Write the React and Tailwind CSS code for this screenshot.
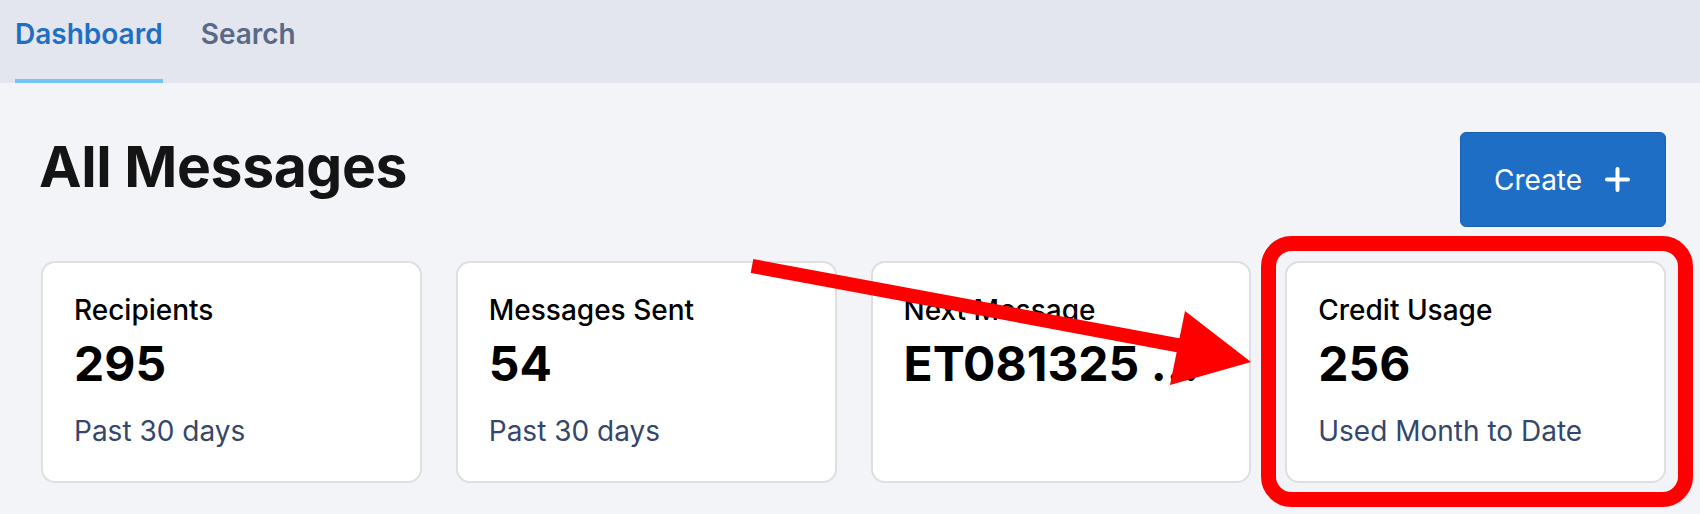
import { Fragment } from 'react';

const stats = [
  { label: 'Recipients', value: '295', note: 'Past 30 days' },
  { label: 'Messages Sent', value: '54', note: 'Past 30 days' },
  { label: 'Next Message', value: 'ET081325 …', note: '' },
  { label: 'Credit Usage', value: '256', note: 'Used Month to Date' },
];

function StatCard({ label, value, note }) {
  return (
    <div className="h-[222px] bg-white border-2 border-[#dfdfe1] rounded-[14px] px-[31px] pt-[30px] min-w-0">
      <div className="text-[28px] leading-[34px] font-medium text-black">{label}</div>
      <div className="mt-[8px] text-[48px] leading-[58px] font-bold text-black whitespace-nowrap">{value}</div>
      {note && <div className="mt-[21px] text-[28px] leading-[34px] text-[#34476b]">{note}</div>}
    </div>
  );
}

export default function App() {
  return (
    <div className="relative w-[1700px] min-h-[514px] bg-[#f3f4f8] font-['Inter',sans-serif] overflow-hidden">
      {/* Tabs */}
      <nav className="h-[83px] bg-[#e3e6ee] flex items-stretch pl-[15px] gap-[38px]">
        <div className="pt-[17px] border-b-4 border-[#75c4f7] text-[28px] leading-[34px] font-semibold text-[#1f6fc5]">
          Dashboard
        </div>
        <div className="pt-[17px] border-b-4 border-transparent text-[28px] leading-[34px] font-semibold text-[#5a6a86]">
          Search
        </div>
      </nav>

      <main className="pl-[41px] pr-[34px] pt-[49px]">
        {/* Header */}
        <div className="flex items-start justify-between">
          <h1 className="text-[57px] leading-[69px] font-bold text-[#141414] tracking-[-0.4px] -ml-[2px]">All Messages</h1>
          <button className="h-[95px] w-[206px] bg-[#1e6ec6] border border-[#1a60b2] rounded-[6px] flex items-center pl-[33px] gap-[23px] text-white text-[28px]">
            <span>Create</span>
            <svg width="25" height="25" viewBox="0 0 25 25" fill="none" stroke="white" strokeWidth="4" strokeLinecap="round">
              <path d="M12.5 2v21M2 12.5h21" />
            </svg>
          </button>
        </div>

        {/* Stat cards */}
        <div className="mt-[34px] grid grid-cols-4 gap-[34px]">
          {stats.map((s) => (
            <Fragment key={s.label}>
              <StatCard {...s} />
            </Fragment>
          ))}
        </div>
      </main>

      {/* Annotation overlay */}
      <svg className="absolute inset-0 pointer-events-none" width="1700" height="514" viewBox="0 0 1700 514">
        <rect x="1268.5" y="243.5" width="417" height="256" rx="23" fill="none" stroke="#fe0000" strokeWidth="15" />
        <line x1="752" y1="266" x2="1182" y2="346" stroke="#fe0000" strokeWidth="14" />
        <polygon points="1185,311 1251,362 1170,385" fill="#fe0000" />
      </svg>
    </div>
  );
}
